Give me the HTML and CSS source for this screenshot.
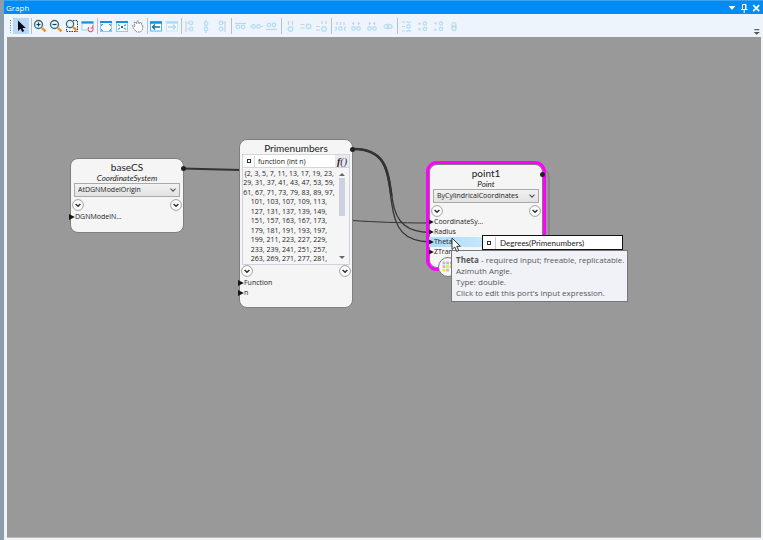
FILE: index.html
```
<!DOCTYPE html>
<html lang="en">
<head>
<meta charset="utf-8">
<title>Graph</title>
<link rel="stylesheet" href="styles.css">
</head>
<body>
<svg class="defs" aria-hidden="true">
  <symbol id="chev" viewBox="0 0 12 12"><circle cx="6" cy="6" r="5.400" fill="#fdfdfd" stroke="#999" stroke-width=".9"/><path d="M3.600 5 6 7.300 8.400 5" fill="none" stroke="#333" stroke-width="1.500"/></symbol>
  <symbol id="down" viewBox="0 0 8 8"><path d="M1.500 2.700 4 5.200 6.500 2.700" fill="none" stroke="#555" stroke-width="1.100"/></symbol>
  <symbol id="port" viewBox="0 0 6 8"><path d="M0 1V7L5.800 4Z" fill="#151515"/></symbol>
  <symbol id="box" viewBox="0 0 8 8"><rect x="2.500" y="2.500" width="3" height="3" fill="none" stroke="#333"/></symbol>
</svg>
<div class="window">
  <header class="titlebar">
    <h1>Graph</h1>
    <button aria-label="Window options"><svg viewBox="0 0 12 12"><path d="M2.500 4H9.500L6 8Z" fill="#fff"/></svg></button>
    <button aria-label="Pin"><svg viewBox="0 0 12 12"><path d="M4.500 7V2.500H8V7M3 7.500H9.500M6.200 7.500V11" fill="none" stroke="#fff"/><path d="M7.500 2.500V7" stroke="#fff"/></svg></button>
    <button aria-label="Close"><svg viewBox="0 0 12 12"><path d="M3.200 3.200 9.200 9.200M9.200 3.200 3.200 9.200" fill="none" stroke="#fff" stroke-width="1.700"/></svg></button>
  </header>
  <div class="toolbar" role="toolbar" aria-label="Graph tools">
    <svg class="grip" viewBox="0 0 3 16"><path d="M1.500 2V15" stroke="#6d747c" stroke-dasharray="1 1.500"/></svg>
    <div class="group first">
      <button class="selected" aria-label="Select"><svg viewBox="0 0 16 16"><path d="M5 2.500V13L7.500 10.800 9.300 14 11.200 13 9.500 10H12.800Z" fill="#0b0b10"/></svg></button>
    </div>
    <div class="group">
      <button aria-label="Zoom in"><svg viewBox="0 0 16 16"><circle cx="6.500" cy="6.500" r="4" fill="#e9f5fa" stroke="#35657b" stroke-width="1.300"/><path d="M4.500 6.500h4M6.500 4.500v4" stroke="#163b50" stroke-width="1.200"/><path d="M10 10 13.500 13.500" stroke="#f39018" stroke-width="2.400"/></svg></button>
      <button aria-label="Zoom out"><svg viewBox="0 0 16 16"><circle cx="6.500" cy="6.500" r="4" fill="#e9f5fa" stroke="#35657b" stroke-width="1.300"/><path d="M4.500 6.500h4" stroke="#163b50" stroke-width="1.200"/><path d="M10 10 13.500 13.500" stroke="#f39018" stroke-width="2.400"/></svg></button>
      <button aria-label="Zoom to selection"><svg viewBox="0 0 16 16"><path d="M9 2.500h4.500V13.500H2.500V9.500" fill="none" stroke="#333" stroke-dasharray="1.500 1"/><circle cx="6" cy="6" r="3.600" fill="#e9f5fa" stroke="#35657b" stroke-width="1.200"/><path d="M9 9 12.500 12.500" stroke="#f39018" stroke-width="2.400"/></svg></button>
      <button aria-label="Reset view"><svg viewBox="0 0 16 16"><rect x="2" y="4" width="11" height="8" fill="#f5fafe" stroke="#9ccfef"/><path d="M1.500 4.500H13.500" stroke="#1691dc" stroke-width="2.200"/><circle cx="10.500" cy="11" r="3.300" fill="#eff5fb"/><path d="M9 9.300A2.500 2.500 0 1 0 12 9.200M12.700 7.500V10h-2" fill="none" stroke="#ed5164" stroke-width="1.100"/></svg></button>
    </div>
    <div class="group">
      <button aria-label="Fit all"><svg viewBox="0 0 16 16"><rect x="2.500" y="3.500" width="11" height="10" fill="#fbfdff" stroke="#8bccf2"/><path d="M2 4H14" stroke="#1691dc" stroke-width="2"/><path d="M3.500 8V6.500H5M11 6.500h1.500V8M3.500 11v1.500H5M11 12.500h1.500V11" fill="none" stroke="#4aa4d6"/></svg></button>
      <button aria-label="Fit selected"><svg viewBox="0 0 16 16"><rect x="2.500" y="3.500" width="11" height="10" fill="#fbfdff" stroke="#8bccf2"/><path d="M2 4H14" stroke="#1691dc" stroke-width="2"/><path d="M4 6.500 6 8M12 6.500 10 8M4 11.500 6 10M12 11.500 10 10" stroke="#4aa4d6" stroke-width="1.200"/><rect x="7" y="8" width="2" height="2" fill="#555"/></svg></button>
      <button aria-label="Pan"><svg viewBox="0 0 16 16"><path d="M5.500 13 3 9.500 2.500 7.500 5 8.500 4 4.500 5.500 4 6.500 6 7 3 8.500 3.200 9 6 10.500 4 11.500 5 11.300 7 13 7.500 12.500 11.500 10.500 14H7Z" fill="#fff" stroke="#777" stroke-width=".9" stroke-dasharray="1.800 .7"/></svg></button>
    </div>
    <div class="group">
      <button aria-label="Back"><svg viewBox="0 0 16 16"><rect x="2.500" y="4" width="11" height="9" fill="#fbfdff" stroke="#53b5ee"/><path d="M2 4.500H14" stroke="#1691dc" stroke-width="2.500"/><path d="M12 9H4.500M7 6.500 4.500 9 7 11.500" fill="none" stroke="#16719f" stroke-width="1.400"/></svg></button>
      <button disabled aria-label="Forward"><svg viewBox="0 0 16 16"><rect x="2.500" y="4" width="11" height="9" fill="#f2f8fd" stroke="#c7e6f8"/><path d="M2 4.500H14" stroke="#a9daf5" stroke-width="2.200"/><path d="M4 9H11.500M9 6.500 11.500 9 9 11.500" fill="none" stroke="#b7d6e6" stroke-width="1.300"/></svg></button>
    </div>
    <div class="group faint">
      <button disabled aria-label="Align left"><svg viewBox="0 0 16 16"><path class="g" d="M4 3V14M5 5h2M5 11h2"/><circle cx="9" cy="5" r="1.800"/><circle cx="9" cy="11" r="1.800"/></svg></button>
      <button disabled aria-label="Align center"><svg viewBox="0 0 16 16"><path class="g" d="M8 2v2M8 7v2M8 13v2"/><circle cx="8" cy="5.500" r="1.800"/><circle cx="8" cy="11" r="1.800"/></svg></button>
      <button disabled aria-label="Align right"><svg viewBox="0 0 16 16"><path class="g" d="M11 3V14M8.500 5H10M8.500 11H10"/><circle cx="7" cy="5" r="1.800"/><circle cx="7" cy="11" r="1.800"/></svg></button>
    </div>
    <div class="group faint">
      <button disabled aria-label="Align top"><svg viewBox="0 0 16 16"><path class="g" d="M3 5.500h11"/><circle cx="6" cy="9" r="1.800"/><circle cx="11" cy="9" r="1.800"/></svg></button>
      <button disabled aria-label="Align middle"><svg viewBox="0 0 16 16"><path class="g" d="M2 8.500h2M7 8.500h2M13 8.500h2"/><circle cx="5.500" cy="8.500" r="1.800"/><circle cx="10.500" cy="8.500" r="1.800"/></svg></button>
      <button disabled aria-label="Align bottom"><svg viewBox="0 0 16 16"><path class="g" d="M2 11.500h11"/><circle cx="5" cy="7" r="1.800"/><circle cx="10" cy="7" r="1.800"/></svg></button>
    </div>
    <div class="group faint">
      <button disabled aria-label="Place below"><svg viewBox="0 0 16 16"><path class="g" d="M6.500 3v4M10.500 3v4"/><circle cx="8.500" cy="11" r="2.400"/></svg></button>
      <button disabled aria-label="Place right"><svg viewBox="0 0 16 16"><path class="g" d="M2.500 6.500h4M2.500 10h4"/><circle cx="10.500" cy="8.500" r="2.400"/></svg></button>
      <button disabled aria-label="Place below right"><svg viewBox="0 0 16 16"><path class="g" d="M8 3v3M12 3v3M2 8.500h4M2 12h4"/><circle cx="10" cy="11" r="2.400"/></svg></button>
    </div>
    <div class="group faint">
      <button disabled aria-label="Distribute columns"><svg viewBox="0 0 16 16"><path class="g" d="M5 4v3M8.500 4v3M12 4v3"/><circle cx="8.500" cy="10.500" r="1.800"/><path d="M3.500 8.500q2 2 0 4.500M13.500 8.500q-2 2 0 4.500"/></svg></button>
      <button disabled aria-label="Spread columns"><svg viewBox="0 0 16 16"><path class="g" d="M5.500 4v3M10.500 4v3M4 5.500h2M10 5.500h2"/><circle cx="5.500" cy="10.500" r="1.800"/><circle cx="10.500" cy="10.500" r="1.800"/></svg></button>
      <button disabled aria-label="Tighten columns"><svg viewBox="0 0 16 16"><path class="g" d="M5.500 4v3M10.500 4v3M5 5.500h2M9 5.500h2"/><circle cx="5.500" cy="10.500" r="1.800"/><circle cx="10.500" cy="10.500" r="1.800"/></svg></button>
      <button disabled aria-label="Merge columns"><svg viewBox="0 0 16 16"><circle cx="6" cy="8.500" r="2"/><circle cx="10" cy="8.500" r="2"/><path class="g" d="M8 5.500v6"/></svg></button>
    </div>
    <div class="group faint">
      <button disabled aria-label="Distribute rows"><svg viewBox="0 0 16 16"><path class="g" d="M4 4h3M4 8.500h3M4 13h3"/><circle cx="10.500" cy="8.500" r="1.800"/><path d="M8.500 3.500q2 2 4.500 0M8.500 13.500q2-2 4.500 0"/></svg></button>
      <button disabled aria-label="Spread rows"><svg viewBox="0 0 16 16"><path class="g" d="M4 6h3M4 11h3M5.500 4.500V6M5.500 11v1.500"/><circle cx="11" cy="5.500" r="1.700"/><circle cx="11" cy="11" r="1.700"/></svg></button>
      <button disabled aria-label="Tighten rows"><svg viewBox="0 0 16 16"><path class="g" d="M4 5h3M4 12h3M5.500 5v1.500M5.500 10.500V12"/><circle cx="11" cy="5.500" r="1.700"/><circle cx="11" cy="11" r="1.700"/></svg></button>
      <button disabled aria-label="Merge rows"><svg viewBox="0 0 16 16"><circle cx="8" cy="6.500" r="2"/><circle cx="8" cy="10.500" r="2"/><path class="g" d="M5 8.500h6"/></svg></button>
    </div>
    <button class="overflow" aria-label="More tools"><svg viewBox="0 0 8 8"><path d="M2 1.500h4.500" stroke="#555"/><path d="M1.500 3.500H7L4.200 6Z" fill="#555"/></svg></button>
  </div>
  <main class="canvas">
    <svg class="wires" aria-hidden="true">
      <g transform="translate(-7 -37)" fill="none" stroke="#333">
        <path d="M183 168.500 240 170" stroke-width="2"/>
        <path d="M352 220.500C375 222 398 223 430 223"/>
        <path d="M352 149C392 148 389 180 392.500 200C396 224 408 232 430 232.500" stroke-width="1.300"/>
        <path d="M352 149C390 148 388 180 391.500 202C395 230 404 241 430 242" stroke-width="1.300"/>
        <path d="M352 149C389 148 388 177 391.500 196" stroke-width="2.400"/>
        <path d="M543 170Q549 170 549 178V244" stroke="#777"/>
      </g>
    </svg>

    <section class="node base">
      <h2>baseCS</h2>
      <p class="kind">CoordinateSystem</p>
      <div class="combo"><select aria-label="baseCS technique"><option>AtDGNModelOrigin</option></select><svg viewBox="0 0 8 8"><use href="#down"/></svg></div>
      <div class="toggles"><button aria-label="Expand inputs"><svg><use href="#chev"/></svg></button><button aria-label="Expand outputs"><svg><use href="#chev"/></svg></button></div>
      <ul class="ports"><li><svg><use href="#port"/></svg>DGNModelN...</li></ul>
      <i class="out"></i>
    </section>

    <section class="node prime">
      <h2>Primenumbers</h2>
      <div class="expr"><svg><use href="#box"/></svg><input aria-label="Function expression" value="function (int n)"><button aria-label="Edit function"><b>f</b>()</button></div>
      <div class="result">
        <div class="values"><span>{2, 3, 5, 7, 11, 13, 17, 19, 23,</span><span>29, 31, 37, 41, 43, 47, 53, 59,</span><span>61, 67, 71, 73, 79, 83, 89, 97,</span><span>101, 103, 107, 109, 113,</span><span>127, 131, 137, 139, 149,</span><span>151, 157, 163, 167, 173,</span><span>179, 181, 191, 193, 197,</span><span>199, 211, 223, 227, 229,</span><span>233, 239, 241, 251, 257,</span><span>263, 269, 271, 277, 281,</span></div>
        <div class="scroll"><svg viewBox="0 0 8 8"><path d="M1 6H7L4 3Z" fill="#666"/></svg><i></i><svg viewBox="0 0 8 8"><path d="M1 2H7L4 5Z" fill="#666"/></svg></div>
      </div>
      <div class="toggles"><button aria-label="Expand inputs"><svg><use href="#chev"/></svg></button><button aria-label="Expand outputs"><svg><use href="#chev"/></svg></button></div>
      <ul class="ports"><li><svg><use href="#port"/></svg>Function</li><li><svg><use href="#port"/></svg>n</li></ul>
      <i class="out"></i>
    </section>

    <section class="node point">
      <h2>point1</h2>
      <p class="kind">Point</p>
      <div class="combo"><select aria-label="point1 technique"><option>ByCylindricalCoordinates</option></select><svg viewBox="0 0 8 8"><use href="#down"/></svg></div>
      <div class="toggles"><button aria-label="Expand inputs"><svg><use href="#chev"/></svg></button><button aria-label="Expand outputs"><svg><use href="#chev"/></svg></button></div>
      <ul class="ports"><li><svg><use href="#port"/></svg>CoordinateSy...</li><li><svg><use href="#port"/></svg>Radius</li><li class="hot"><svg><use href="#port"/></svg>Theta</li><li><svg><use href="#port"/></svg>ZTransl...</li></ul>
      <i class="out"></i>
      <button class="badge" aria-label="Replication"><svg viewBox="0 0 20 20"><g fill="#bdbdbd"><rect x="4" y="4" width="3" height="3"/><rect x="8" y="4" width="3" height="3"/><rect x="12" y="4" width="3" height="3"/><rect x="4" y="8" width="3" height="3"/><rect x="12" y="8" width="3" height="3"/><rect x="8" y="12" width="3" height="3"/></g><g fill="#f3ec00"><rect x="8" y="8" width="3" height="3"/><rect x="4" y="12" width="3" height="3"/></g></svg></button>
    </section>

    <div class="tooltip" role="tooltip">
      <p><b>Theta</b> - required input; freeable, replicatable.</p>
      <p>Azimuth Angle.</p>
      <p>Type: double.</p>
      <p>Click to edit this port's input expression.</p>
    </div>
    <div class="editor"><svg><use href="#box"/></svg><input aria-label="Theta expression" value="Degrees(Primenumbers)"></div>
    <svg class="cursor" viewBox="0 0 10 16" aria-hidden="true"><path d="M1 1V12.500L3.700 10 5.700 14.500 7.700 13.600 5.800 9.300H9.300Z" fill="#fff" stroke="#222" stroke-width=".9"/></svg>
  </main>
</div>
</body>
</html>
```
FILE: styles.css
```
* { box-sizing: border-box; }
body { margin: 0; font-family: "Open Sans", "Noto Sans", sans-serif; color: #222; }
h1, h2, p, ul { margin: 0; padding: 0; font-weight: 400; }
ul { list-style: none; }
button, input, select { margin: 0; padding: 0; border: 0; background: none; font: inherit; color: inherit; border-radius: 0; }
svg { display: block; flex: none; }
.defs { position: absolute; width: 0; height: 0; }

.window { display: flex; flex-direction: column; min-height: 100vh; border-left: 4px solid #8c9dab; background: #f1f3f6; }
.titlebar { display: flex; align-items: center; height: 14px; padding: 0 1px 0 2px; background: #008cf4; border-top: 1px solid #39a4f2; color: #fff; }
.titlebar h1 { flex: 1; font-size: 8px; line-height: 12px; }
.titlebar button, .titlebar svg { width: 12px; height: 12px; }

.toolbar { display: flex; align-items: center; height: 23px; margin-right: 2px; padding: 1px 0 0 5px; background: #edf4fc; }
.grip { width: 3px; height: 16px; }
.group { display: flex; padding-right: 1px; border-right: 1px solid #b9bfc7; }
.group.first { padding-left: 1px; padding-right: 2px; }
.group:nth-last-child(2) { border: 0; }
.group button, .group svg { width: 16px; height: 16px; }
.group .selected { background: #b5d8fb; }
.faint svg { fill: #e2f2fc; stroke: #b4def6; stroke-width: 1.2; }
.faint path { fill: none; }
.faint .g { stroke: #ccd1d8; }
.overflow { align-self: flex-end; margin-left: auto; }
.overflow, .overflow svg { width: 9px; height: 9px; }

.canvas { position: relative; flex: 1; margin: 0 2px 2px 3px; background: #999; border-bottom: 1px solid #bbb; overflow: hidden; }
.wires { position: absolute; width: 100%; height: 100%; }

.node { position: absolute; width: 114px; padding: 2px 3px 0; background: #f5f5f5; border: 1px solid #7e7e7e; border-radius: 8px; font-size: 7px; line-height: 10px; }
.base { left: 63px; top: 121px; height: 75px; }
.prime { left: 232px; top: 102px; height: 169px; }
.point { left: 422px; top: 127px; height: 104px; outline: 3px solid #f0f; }
.node h2, .kind { font-family: Lato, "Open Sans", sans-serif; text-align: center; }
.node h2 { font-size: 10px; line-height: 12px; }
.kind { font-size: 8px; font-style: italic; }
.combo { display: flex; align-items: center; height: 14px; border: 1px solid #aaa; background: linear-gradient(#f2f2f2, #e2e2e2); }
.combo select { flex: 1; min-width: 0; height: 12px; padding-left: 3px; appearance: none; line-height: 12px; }
.combo svg { width: 8px; height: 8px; margin-right: 2px; }
.toggles { display: flex; justify-content: space-between; margin: 2px -2px 0; }
.toggles button, .toggles svg { width: 12px; height: 12px; }
.ports { margin: 1px -4px 0 -5px; }
.point .ports { margin-top: 0; }
.ports li { display: flex; align-items: center; height: 10px; }
.ports svg { width: 6px; height: 8px; }
.hot { background: linear-gradient(90deg, #a9dcf8, #e3f3fc); }
.out { position: absolute; right: -3px; top: 7px; width: 5px; height: 5px; border-radius: 50%; background: #222; }

.expr { display: flex; align-items: center; height: 14px; margin: 0 -1px; border: 1px solid #d3d5df; background: #fff; }
.expr svg { width: 8px; height: 8px; margin: 0 1px 0 2px; }
.expr input { flex: 1; min-width: 0; height: 11px; padding-left: 3px; border-left: 1px solid #d3d5df; }
.expr button { width: 14px; height: 12px; background: #e8e8f0; font: italic 10px/11px "Liberation Serif", serif; }
.result { display: flex; height: 97px; margin: 0 -1px; border: 1px solid #cfd1df; border-top: 0; }
.values { flex: 1; min-width: 0; display: flex; flex-direction: column; justify-content: space-between; padding: 1px 0; line-height: 9px; text-align: center; white-space: nowrap; }
.scroll { display: flex; flex-direction: column; align-items: center; width: 14px; padding: 2px 0; }
.scroll svg { width: 8px; height: 8px; }
.scroll i { width: 6px; height: 38px; margin-bottom: auto; background: #cdd0df; }
.prime .toggles { margin-top: 0; }

.badge { position: absolute; left: 8px; top: 92px; width: 20px; height: 20px; border: 1px solid #777; border-radius: 50%; background: #f6f6f6; }
.badge svg { width: 18px; height: 18px; }
.tooltip { position: absolute; left: 444px; top: 213px; padding: 3px; border: 1px solid #777; background: #f1f2f7; color: #575757; font-size: 8px; line-height: 11px; white-space: nowrap; }
.tooltip { padding-left: 4px; }
.editor { position: absolute; left: 475px; top: 198px; width: 141px; height: 15px; display: flex; align-items: center; border: 1px solid #111; background: #fff; font-family: Lato, "Open Sans", sans-serif; font-size: 8px; }
.editor svg { width: 8px; height: 8px; margin: 0 2px; }
.editor input { flex: 1; min-width: 0; height: 12px; padding-left: 4px; border-left: 1px solid #ccc; }
.cursor { position: absolute; left: 444px; top: 200px; width: 10px; height: 16px; }
```
